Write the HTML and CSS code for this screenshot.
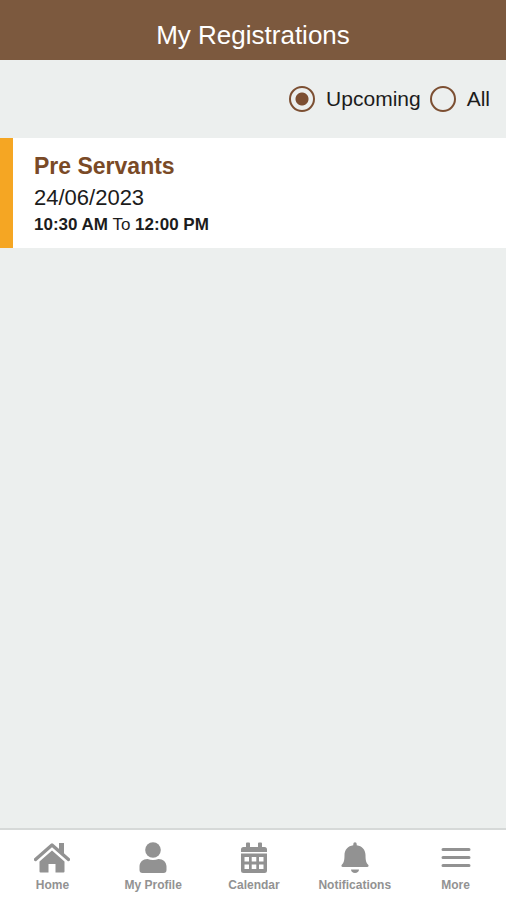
FILE: index.html
```html
<!DOCTYPE html>
<html lang="en">
<head>
<meta charset="utf-8">
<meta name="viewport" content="width=device-width, initial-scale=1">
<title>My Registrations</title>
<link rel="stylesheet" href="styles.css">
</head>
<body>
<header class="header"><h1 class="title">My Registrations</h1></header>
<main class="main">
  <form class="filters" aria-label="Show registrations">
    <label class="filter"><input class="radio" type="radio" name="show" checked>Upcoming</label>
    <label class="filter"><input class="radio" type="radio" name="show">All</label>
  </form>
  <article class="card">
    <h2 class="name">Pre Servants</h2>
    <p class="date">24/06/2023</p>
    <p class="time"><b>10:30 AM</b> To <b>12:00 PM</b></p>
  </article>
</main>
<nav class="nav">
  <a class="tab" href="#home">
    <svg class="icon" viewBox="0 0 36 32" aria-hidden="true"><path d="M1.500 17.500 18 3 34.500 17.500" fill="none" stroke="currentColor" stroke-width="3.400" stroke-linejoin="round" stroke-linecap="round"/><path d="M25 1h5v12l-5-4.500z"/><path d="M18 8.500 30.500 19.500V29.500a1 1 0 0 1-1 1H21.500V22h-7v8.500H6.500a1 1 0 0 1-1-1V19.500z"/></svg>
    Home
  </a>
  <a class="tab" href="#profile">
    <svg class="icon" viewBox="0 0 36 32" aria-hidden="true"><circle cx="18" cy="8" r="7.800"/><path d="M4.500 28v-3.500c0-4.500 3.500-7.500 8-7.500 3.500 1.400 7.500 1.400 11 0 4.500 0 8 3 8 7.500V28a3 3 0 0 1-3 3h-21a3 3 0 0 1-3-3z"/></svg>
    My Profile
  </a>
  <a class="tab" href="#calendar">
    <svg class="icon" viewBox="0 0 36 32" aria-hidden="true"><path d="M10 1.500a1 1 0 0 1 1-1h2a1 1 0 0 1 1 1V5h8V1.500a1 1 0 0 1 1-1h2a1 1 0 0 1 1 1V5h2.500A2.500 2.500 0 0 1 31 7.500V10H5V7.500A2.500 2.500 0 0 1 7.500 5H10z"/><path fill-rule="evenodd" d="M5 11.500h26v17a2.500 2.500 0 0 1-2.500 2.500h-21A2.500 2.500 0 0 1 5 28.500zM8.500 15v4.500H13V15zM15.700 15v4.500h4.600V15zM23 15v4.500h4.500V15zM8.500 22.500V27H13v-4.500zM15.700 22.500V27h4.600v-4.500zM23 22.500V27h4.500v-4.500z"/></svg>
    Calendar
  </a>
  <a class="tab" href="#notifications">
    <svg class="icon" viewBox="0 0 36 32" aria-hidden="true"><path d="M16.300 2a1.700 1.700 0 0 1 3.400 0v1.200c5.300.8 8.800 4.500 8.800 9.800 0 5.500.7 7.800 2.700 9.800.8.900.3 2.200-1 2.200H5.800c-1.300 0-1.800-1.300-1-2.200C6.800 20.800 7.500 18.500 7.500 13c0-5.300 3.500-9 8.800-9.800z"/><path d="M14 27.500h8c0 2.200-1.800 3.500-4 3.500s-4-1.300-4-3.500z"/></svg>
    Notifications
  </a>
  <a class="tab" href="#more">
    <svg class="icon" viewBox="0 0 36 32" aria-hidden="true"><path d="M5 7.500h26M5 15.500h26M5 23.500h26" stroke="currentColor" stroke-width="3" stroke-linecap="round"/></svg>
    More
  </a>
</nav>
</body>
</html>
```
FILE: styles.css
```css
* { box-sizing: border-box; }

body {
  margin: 0;
  min-height: 100vh;
  display: flex;
  flex-direction: column;
  background: #ecefee;
  color: #1c1c1c;
  font-family: "Liberation Sans", Arial, sans-serif;
}

h1, h2, p { margin: 0; }

.header {
  padding: 20px 16px 10px;
  background: #7c593e;
  color: #fff;
  text-align: center;
}

.title {
  font-size: 26px;
  font-weight: 400;
  line-height: 30px;
}

.main { flex: 1; }

.filters {
  display: flex;
  justify-content: flex-end;
  gap: 9px;
  padding: 24px 16px;
}

.filter {
  display: flex;
  align-items: center;
  gap: 11px;
  font-size: 21px;
  line-height: 30px;
}

.radio {
  appearance: none;
  width: 26px;
  height: 26px;
  margin: 0;
  border: 2px solid #7c4f32;
  border-radius: 50%;
}

.radio:checked {
  background: radial-gradient(circle, #7c4f32 6px, transparent 7px);
}

.card {
  padding: 12px 21px;
  border-left: 13px solid #f5a623;
  background: #fff;
}

.name {
  color: #7a4a26;
  font-size: 23px;
  line-height: 32px;
}

.date {
  font-size: 22px;
  line-height: 32px;
}

.time {
  font-size: 17px;
  line-height: 22px;
}

.nav {
  display: grid;
  grid-template-columns: repeat(5, 1fr);
  padding-left: 2px;
  border-top: 2px solid #d6d9d8;
  background: #fff;
}

.tab {
  display: flex;
  flex-direction: column;
  align-items: center;
  gap: 4px;
  padding: 12px 0 8px;
  color: #929292;
  font-size: 12px;
  font-weight: 700;
  line-height: 14px;
  text-decoration: none;
}

.icon {
  width: 36px;
  height: 32px;
  fill: currentColor;
}
```
